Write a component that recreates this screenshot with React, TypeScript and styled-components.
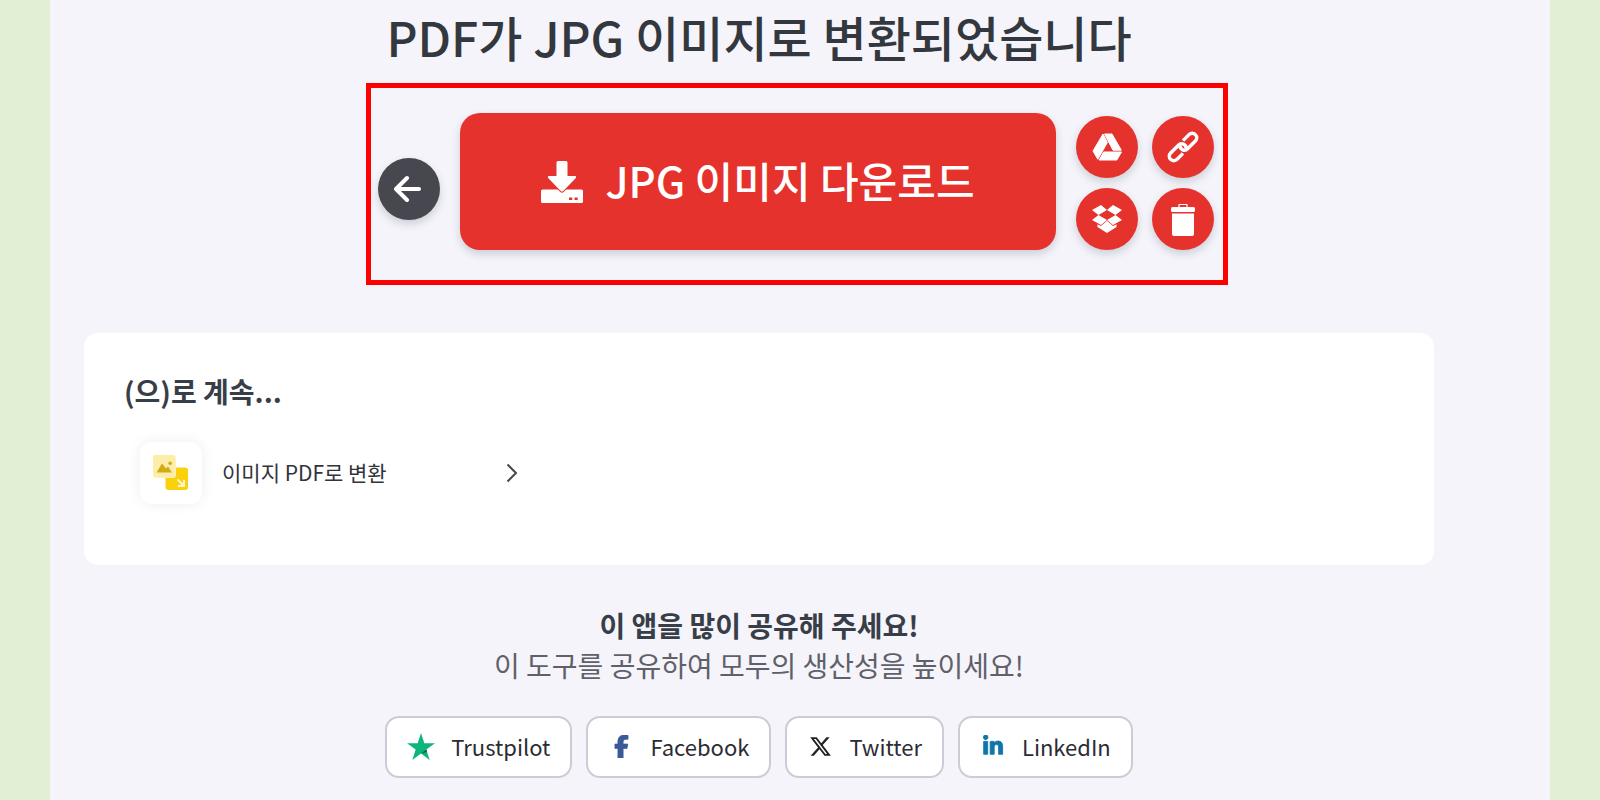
import React from "react";
import styled, { createGlobalStyle } from "styled-components";
import { FaFacebookF, FaLinkedinIn, FaXTwitter } from "react-icons/fa6";

const GlobalStyle = createGlobalStyle`
  *, *::before, *::after { box-sizing: border-box; }
  body {
    margin: 0;
    background: #e2efd5;
    color: #383e47;
    font-family: "Noto Sans CJK KR", "Noto Sans", sans-serif;
  }
  button { font: inherit; border: 0; cursor: pointer; }
  h1, h2, p, ul { margin: 0; padding: 0; }
`;

const Sheet = styled.main`
  min-height: 100vh;
  margin: 0 50px;
  padding: 6px 116px 22px 34px;
  background: #f5f4fa;
  display: flex;
  flex-direction: column;
  align-items: center;
`;

const Title = styled.h1`
  font-size: 48px;
  line-height: 60px;
  font-weight: 500;
  color: #33383f;
  text-align: center;
`;

const ActionRow = styled.div`
  width: 100%;
  display: flex;
  justify-content: center;
  padding-left: 76px;
  margin-top: 17px;
`;

const ActionFrame = styled.section`
  display: flex;
  align-items: center;
  gap: 20px;
  padding: 25px 9px 30px 7px;
  border: 5px solid #ff0000;
`;

const CircleButton = styled.button<{ $dark?: boolean }>`
  width: 62px;
  height: 62px;
  flex: none;
  padding: 0;
  border-radius: 50%;
  display: flex;
  align-items: center;
  justify-content: center;
  color: #fff;
  background: ${(p) => (p.$dark ? "#47474f" : "#e5322d")};
  box-shadow: 0 4px 8px rgba(40, 60, 80, 0.2);
`;

const BackSlot = styled.div`
  padding-top: 14px;
`;

const DownloadButton = styled.button`
  width: 596px;
  height: 137px;
  border-radius: 20px;
  display: flex;
  align-items: center;
  justify-content: center;
  gap: 22px;
  background: #e5322d;
  color: #fff;
  font-size: 42px;
  line-height: 60px;
  font-weight: 500;
  box-shadow: 0 4px 8px rgba(40, 60, 80, 0.2);
`;

const DownloadLabel = styled.span`
  padding-bottom: 4px;
`;

const CircleGrid = styled.div`
  display: grid;
  grid-template-columns: 62px 62px;
  gap: 10px 14px;
  align-self: flex-end;
`;

const Card = styled.section`
  width: 100%;
  margin-top: 48px;
  padding: 38px 40px 61px;
  border-radius: 14px;
  background: #fff;
`;

const CardTitle = styled.h2`
  font-size: 28px;
  line-height: 40px;
  font-weight: 700;
`;

const ToolLink = styled.a`
  display: flex;
  align-items: center;
  width: 394px;
  margin-top: 31px;
  padding: 0 0 0 16px;
  gap: 20px;
  color: #33333b;
  font-size: 21px;
  line-height: 30px;
  text-decoration: none;
`;

const ToolTile = styled.span`
  width: 62px;
  height: 62px;
  border-radius: 12px;
  display: flex;
  align-items: center;
  justify-content: center;
  background: #fff;
  box-shadow: 0 0 14px rgba(0, 0, 0, 0.07);
`;

const ToolName = styled.span`
  flex: 1;
  padding-bottom: 2px;
`;

const Share = styled.section`
  margin-top: 40px;
  text-align: center;
  font-size: 28px;
  line-height: 40px;
`;

const ShareTitle = styled.h2`
  font-size: 28px;
  line-height: 40px;
  font-weight: 700;
`;

const ShareText = styled.p`
  color: #5f6069;
`;

const ShareList = styled.ul`
  margin-top: 31px;
  display: flex;
  justify-content: center;
  gap: 14px;
  list-style: none;
`;

const ShareLink = styled.a`
  height: 62px;
  padding: 0 20px 2px;
  display: flex;
  align-items: center;
  gap: 16px;
  border: 2px solid #cdccd6;
  border-radius: 14px;
  background: #fff;
  color: #2b2b33;
  font-size: 22px;
  line-height: 32px;
  text-decoration: none;
`;

const ShareIcon = styled.span<{ $color: string }>`
  min-width: 26px;
  display: flex;
  justify-content: center;
  color: ${(p) => p.$color};
`;

const ArrowIcon = () => (
  <svg width="30" height="30" viewBox="0 0 30 30" fill="none" stroke="currentColor" strokeWidth="4" strokeLinecap="round" strokeLinejoin="round" aria-hidden="true">
    <path d="M13 4 2 15l11 11M3 15h22" />
  </svg>
);

const DownloadIcon = () => (
  <svg width="42" height="42" viewBox="0 0 42 42" aria-hidden="true">
    <path fill="#fff" d="M1.500 28.500H40.500Q42 28.500 42 30V40.500Q42 42 40.500 42H1.500Q0 42 0 40.500V30Q0 28.500 1.500 28.500Z" />
    <path fill="#fff" stroke="#e5322d" strokeWidth="2" paintOrder="stroke" d="M17 0H25Q26.500 0 26.500 1.500V15H34Q36 15.500 34.600 17.200L22.300 30Q21 31.200 19.700 30L7.400 17.200Q6 15.500 8 15H15.500V1.500Q15.500 0 17 0Z" />
    <path fill="#e5322d" d="M28 36.500h3.200v2.500H28zM33.500 36.500h3.200v2.500h-3.200z" />
  </svg>
);

const DriveIcon = () => (
  <svg width="30" height="28" viewBox="0 0 30 28" fill="currentColor" stroke="currentColor" strokeWidth="1" strokeLinejoin="round" aria-hidden="true">
    <path d="M11 1 1 18 5.800 26.300 15.400 9.500Z" />
    <path d="M12.500 1H20L29.300 17.200H21Z" />
    <path d="M11.600 19H29.500L24.800 27H7.200Z" />
  </svg>
);

const LinkIcon = () => (
  <svg width="32" height="32" viewBox="0 0 32 32" fill="none" stroke="currentColor" strokeWidth="3.500" aria-hidden="true">
    <g transform="rotate(-45 16 16)">
      <path d="M11.500 20.500H3A4.500 4.500 0 0 1 3 11.500H14A4.500 4.500 0 0 1 17.200 19.200" />
      <path d="M20.500 11.500H29A4.500 4.500 0 0 1 29 20.500H18A4.500 4.500 0 0 1 14.800 12.800" />
    </g>
  </svg>
);

const DropboxIcon = () => (
  <svg width="30" height="28" viewBox="0 0 30 28" fill="currentColor" aria-hidden="true">
    <path d="M9 0 15 5 6.500 10 0 5ZM21 0 30 5 23.500 10 15 5ZM0 15 6.500 10 15 15 9 20ZM30 15 23.500 10 15 15 21 20Z" />
    <path d="M15 15.800 21 21 24.500 19.200V22L15 28 5.500 22V19.200L9 21Z" />
  </svg>
);

const TrashIcon = () => (
  <svg width="26" height="34" viewBox="0 0 26 34" fill="currentColor" aria-hidden="true">
    <path d="M9 5.500V2.500H17V5.500" fill="none" stroke="currentColor" strokeWidth="1.200" strokeLinejoin="round" />
    <rect x="1" y="5" width="24" height="5" rx="1.500" />
    <path d="M2 11.500H24V32Q24 34 22 34H4Q2 34 2 32Z" />
  </svg>
);

const ImagePdfIcon = () => (
  <svg width="36" height="36" viewBox="0 0 36 36" aria-hidden="true">
    <rect x="12.500" y="12.500" width="22.500" height="22.500" rx="3" fill="#fad10c" />
    <rect x="0" y="0" width="23" height="23" rx="3" fill="#fff3b8" />
    <rect x="0" y="0" width="22" height="22" rx="2" fill="#fcedaa" />
    <path d="M3.500 17.500 9 8.500 13 13.500 15 11.500 19 17.500Z" fill="#d1ac12" />
    <circle cx="17.200" cy="8.200" r="1.800" fill="#d1ac12" />
    <path d="M24.500 24.500 30.500 30.500M31 25V31H25" fill="none" stroke="#fff8cf" strokeWidth="2" />
  </svg>
);

const ChevronIcon = () => (
  <svg width="12" height="20" viewBox="0 0 12 20" fill="none" stroke="#47474f" strokeWidth="2" aria-hidden="true">
    <path d="M1.500 1.500 10 10 1.500 18.500" />
  </svg>
);

const StarIcon = () => (
  <svg width="28" height="27" viewBox="0 0 28 27" aria-hidden="true">
    <path fill="#0bb57d" d="M14 0 17.300 10.300H28L19.300 16.600 22.700 27 14 20.600 5.300 27 8.700 16.600 0 10.300H10.700Z" />
    <path fill="#08603f" d="M20 18.900 19.300 16.600 14 20.600Z" />
  </svg>
);

const shares = [
  { name: "Trustpilot", color: "#0bb57d", icon: <StarIcon /> },
  { name: "Facebook", color: "#3b5998", icon: <FaFacebookF size={23} stroke="#3b5998" strokeWidth={16} /> },
  { name: "Twitter", color: "#222222", icon: <FaXTwitter size={23} /> },
  { name: "LinkedIn", color: "#0e76a8", icon: <FaLinkedinIn size={22} stroke="#0e76a8" strokeWidth={20} /> },
];

export default function App() {
  return (
    <>
      <GlobalStyle />
      <Sheet>
        <Title>PDF가 JPG 이미지로 변환되었습니다</Title>
        <ActionRow>
          <ActionFrame>
            <BackSlot>
              <CircleButton $dark aria-label="뒤로"><ArrowIcon /></CircleButton>
            </BackSlot>
            <DownloadButton>
              <DownloadIcon />
              <DownloadLabel>JPG 이미지 다운로드</DownloadLabel>
            </DownloadButton>
            <CircleGrid>
              <CircleButton aria-label="Google Drive"><DriveIcon /></CircleButton>
              <CircleButton aria-label="링크"><LinkIcon /></CircleButton>
              <CircleButton aria-label="Dropbox"><DropboxIcon /></CircleButton>
              <CircleButton aria-label="삭제"><TrashIcon /></CircleButton>
            </CircleGrid>
          </ActionFrame>
        </ActionRow>
        <Card>
          <CardTitle>(으)로 계속...</CardTitle>
          <ToolLink href="#image-pdf">
            <ToolTile><ImagePdfIcon /></ToolTile>
            <ToolName>이미지 PDF로 변환</ToolName>
            <ChevronIcon />
          </ToolLink>
        </Card>
        <Share>
          <ShareTitle>이 앱을 많이 공유해 주세요!</ShareTitle>
          <ShareText>이 도구를 공유하여 모두의 생산성을 높이세요!</ShareText>
          <ShareList>
            {shares.map((s) => (
              <li key={s.name}>
                <ShareLink href={`#${s.name.toLowerCase()}`}>
                  <ShareIcon $color={s.color}>{s.icon}</ShareIcon>
                  {s.name}
                </ShareLink>
              </li>
            ))}
          </ShareList>
        </Share>
      </Sheet>
    </>
  );
}
